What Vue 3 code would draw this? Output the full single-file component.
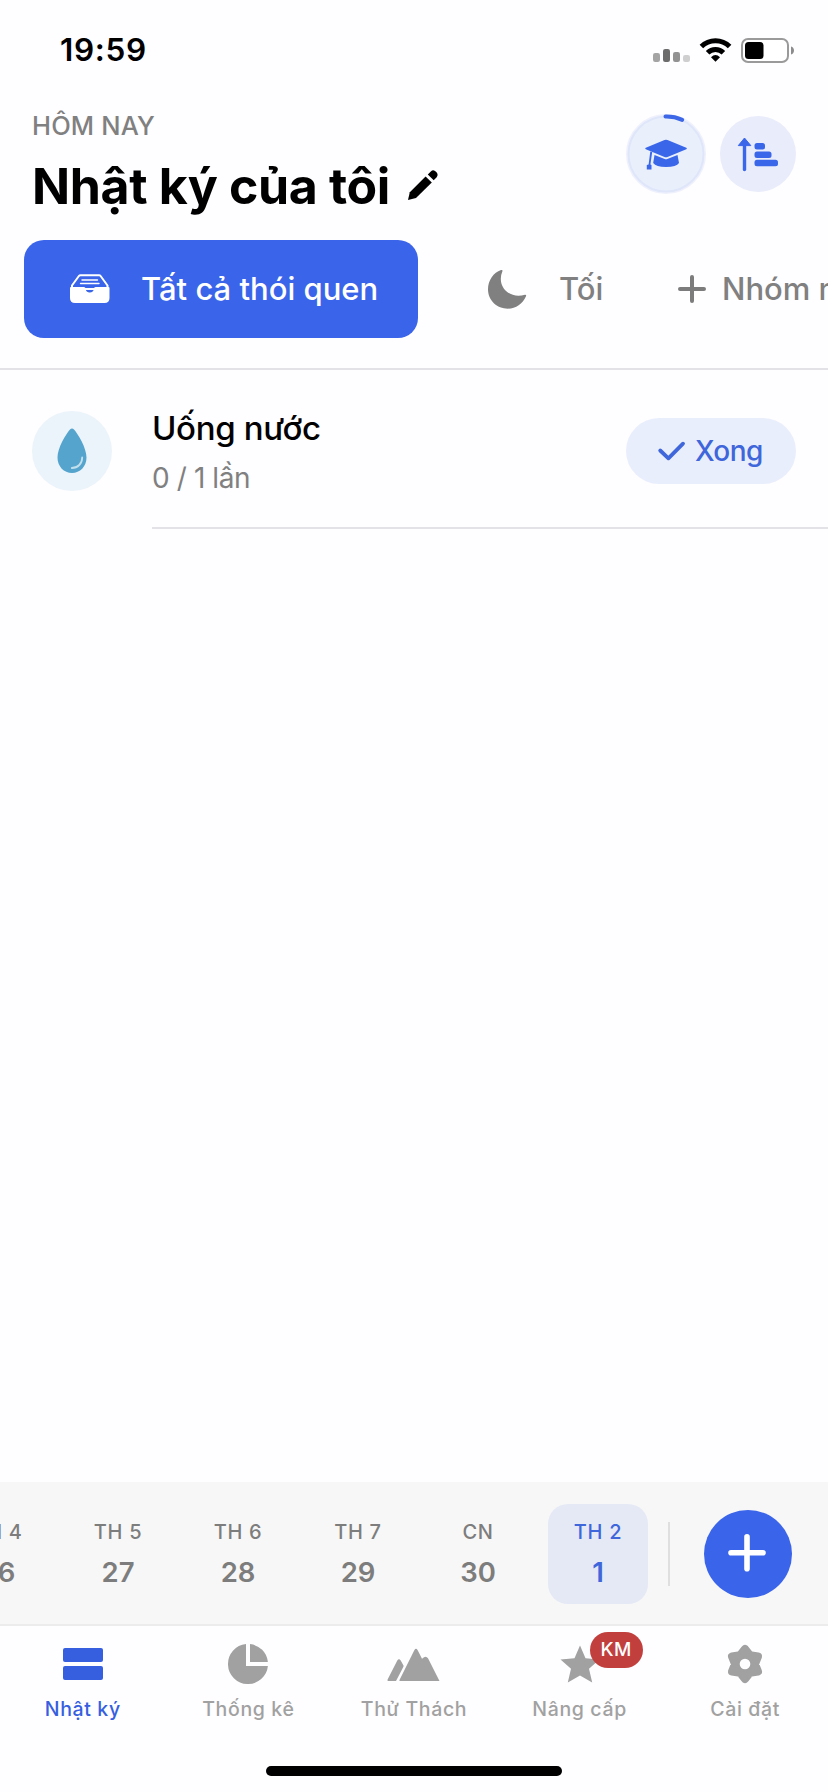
<script setup>
const days = [
  { name: 'TH 4', num: '26' },
  { name: 'TH 5', num: '27' },
  { name: 'TH 6', num: '28' },
  { name: 'TH 7', num: '29' },
  { name: 'CN', num: '30' },
  { name: 'TH 2', num: '1', active: true }
]
const tabs = [
  { id: 'journal', label: 'Nhật ký', active: true },
  { id: 'stats', label: 'Thống kê' },
  { id: 'challenge', label: 'Thử Thách' },
  { id: 'upgrade', label: 'Nâng cấp', badge: 'KM' },
  { id: 'settings', label: 'Cài đặt' }
]
</script>

<template>
  <div class="screen">
    <div class="status">
      <span class="time">19:59</span>
      <svg class="signals" width="144" height="28" viewBox="0 0 144 28">
        <rect x="0" y="15" width="7" height="9" rx="2.2" fill="#a4a4a4" />
        <rect x="10" y="11" width="7" height="13" rx="2.2" fill="#6c6c6c" />
        <rect x="20" y="14" width="7" height="10" rx="2.2" fill="#929292" />
        <rect x="30" y="17" width="7" height="7" rx="2.2" fill="#cfcfcf" />
        <g fill="none" stroke="#000" stroke-width="5">
          <path d="M48.400 8.600A20 20 0 0 1 76.600 8.600" />
          <path d="M54.600 14.800A11.200 11.200 0 0 1 70.400 14.800" />
        </g>
        <path d="M62.500 23.800L58 19.300Q62.500 14.500 67 19.300Z" fill="#000" />
        <rect x="89" y="1" width="46" height="23" rx="6" fill="#fff" stroke="#9a9a9a" stroke-width="2" />
        <rect x="92" y="4" width="18.500" height="17" rx="3.500" fill="#000" />
        <path d="M138 8.500c4 1 4 7 0 8z" fill="#8c8c8c" />
      </svg>
    </div>

    <header class="header">
      <div class="heading">
        <div class="today">HÔM NAY</div>
        <div class="title-row">
          <h1 class="title">Nhật ký của tôi</h1>
          <svg class="pencil" width="30" height="30" viewBox="0 0 30 30">
            <path d="M0 30L1.800 22.200L17.600 6.500L23.800 12.500L8 28.100Z" fill="#000" />
            <path d="M19.800 4.400L22.800 1.400Q25.500-1 28 1.800Q30.800 4.500 28.700 7.300L25.700 10.300Z" fill="#000" />
          </svg>
        </div>
      </div>
      <div class="actions">
        <svg width="80" height="82" viewBox="0 0 80 82">
          <circle cx="40" cy="41" r="38.500" fill="#e9effb" stroke="#eef1fc" stroke-width="3" />
          <circle cx="40" cy="41" r="37.500" fill="none" stroke="#dfe6fa" stroke-width="2" />
          <path d="M39.500 3.500A38 38 0 0 1 56.200 6.800" fill="none" stroke="#3d67e6" stroke-width="4" stroke-linecap="round" />
          <g fill="#3a66ea">
            <path d="M38.500 27Q40 26.300 41.500 27L60.300 34.700Q61.600 35.500 60.300 36.200L41.500 44Q40 44.600 38.500 44L19.800 36.200Q18.500 35.500 19.800 34.700Z" />
            <path d="M28.500 42L38.700 46.100Q40 46.600 41.300 46.100L51.500 42L53 50Q50.500 54 40 54Q30 54 27.200 50Z" />
            <path d="M24.300 38.500L26.200 39L24.400 51.500L25.500 52V56.500H20.800V52L22.600 51.500Z" />
          </g>
        </svg>
        <svg width="76" height="76" viewBox="0 0 76 76">
          <circle cx="38" cy="38" r="38" fill="#e9ecfa" />
          <g fill="#3a66ea">
            <path d="M24.500 25V53.500" stroke="#3a66ea" stroke-width="3.400" stroke-linecap="round" />
            <path d="M24.500 22L30.800 29.600H18.300Z" stroke="#3a66ea" stroke-width="1" stroke-linejoin="round" />
            <rect x="34.500" y="27" width="10.500" height="6.500" rx="2.500" />
            <rect x="34.500" y="35.500" width="17" height="6.500" rx="2.500" />
            <rect x="34.500" y="43.800" width="23.500" height="6.500" rx="2.500" />
          </g>
        </svg>
      </div>
    </header>

    <div class="groups">
      <div class="chip">
        <svg width="40" height="30" viewBox="0 0 40 30">
          <path d="M10.500 1.200H29Q30 1.200 30.600 2L37.500 11.500V15H2V11.500L8.900 2Q9.500 1.200 10.500 1.200Z" fill="none" stroke="#fff" stroke-width="2" />
          <path d="M12 6H27.500M10.500 9.500H29" stroke="#fff" stroke-width="1.400" stroke-linecap="round" />
          <path d="M0 14Q0 13 1 13H14Q15.500 13 15.500 14.500Q16 18.500 19.700 18.500Q23.500 18.500 24 14.500Q24 13 25.500 13H38.500Q39.500 13 39.500 14V24Q39.500 29 34.500 29H5Q0 29 0 24Z" fill="#fff" />
        </svg>
        <span class="chip-text">Tất cả thói quen</span>
      </div>
      <div class="group evening">
        <svg width="38" height="39" viewBox="0 0 38 39">
          <path d="M14.500 1Q12.300 6 13 11.500C14.500 21.500 25 28.500 37 24.700Q38.600 24.500 38 26.300C34.500 34 28 38.700 20 38.700C9 38.700 0 30.500 0 19.300C0 10.500 5.500 2.500 13 .1Q14.800-.3 14.500 1Z" fill="#808080" />
        </svg>
        <span class="group-text">Tối</span>
      </div>
      <div class="group add-group">
        <svg width="28" height="28" viewBox="0 0 28 28">
          <path d="M14 2V26M2 14H26" stroke="#7c7c7c" stroke-width="4" stroke-linecap="round" />
        </svg>
        <span class="group-text">Nhóm mới</span>
      </div>
    </div>

    <main class="list">
      <article class="habit">
        <div class="drop">
          <svg width="30" height="46" viewBox="0 0 30 46">
            <path d="M13 1.600Q15 -.6 17 1.600C21 6 29.500 20 29.500 29.500C29.500 38.500 23 45 15 45S.5 38.500.5 29.500C.5 20 9 6 13 1.600Z" fill="#55a4cd" />
            <path d="M14.800 40C21 40 25.200 35.500 25.200 29.500" fill="none" stroke="#c2dfed" stroke-width="1.800" stroke-linecap="round" />
          </svg>
        </div>
        <div class="habit-body">
          <div class="habit-text">
            <div class="habit-name">Uống nước</div>
            <div class="habit-count">0 / 1 lần</div>
          </div>
          <div class="done">
            <svg width="28" height="20" viewBox="0 0 28 20">
              <path d="M2.200 9.500L10.400 17.300L25 2.700" fill="none" stroke="#3f66da" stroke-width="3.800" stroke-linecap="round" stroke-linejoin="round" />
            </svg>
            <span class="done-text">Xong</span>
          </div>
        </div>
      </article>
    </main>

    <section class="calendar">
      <div class="days">
        <div v-for="d in days" :key="d.num" class="day" :class="{ active: d.active }">
          <span class="day-name">{{ d.name }}</span>
          <span class="day-num">{{ d.num }}</span>
        </div>
      </div>
      <div class="divider"></div>
      <div class="fab">
        <svg width="40" height="40" viewBox="0 0 40 40">
          <path d="M19 2.700V34.700M3 18.700H35" stroke="#fff" stroke-width="5.600" stroke-linecap="round" />
        </svg>
      </div>
    </section>

    <nav class="tabs">
      <div v-for="t in tabs" :key="t.id" class="tab" :class="{ active: t.active }">
        <div class="tab-icon">
          <svg v-if="t.id === 'journal'" width="40" height="40" viewBox="0 0 40 40" fill="#355fdf">
            <rect y="4" width="40" height="14" rx="2" />
            <rect y="22" width="40" height="14" rx="2" />
          </svg>
          <svg v-else-if="t.id === 'stats'" width="40" height="40" viewBox="0 0 40 40" fill="#a1a1a1">
            <path d="M18 .1V22H39.900A20 20 0 1 1 18 .1Z" />
            <path d="M22 .1A20 20 0 0 1 39.900 18H22Z" />
          </svg>
          <svg v-else-if="t.id === 'challenge'" width="54" height="40" viewBox="0 0 54 40" fill="#a1a1a1">
            <path d="M1.300 37Q0 37 .6 35.500L10.300 16.500Q12 14 13.700 16.500L16.500 21.500Q16.700 22.300 16.300 23L9 37Z" />
            <path d="M13 37Q12 37 12.500 36L27.300 6.200Q29 3.300 30.700 6.200L35 14.700L37 13.200Q39.400 12 41 14.300L52.500 37Z" />
          </svg>
          <svg v-else-if="t.id === 'upgrade'" width="40" height="40" viewBox="0 0 40 40" fill="#a1a1a1">
            <path d="M20 1.500L25.500 14.200L39.500 15.500L29 24.800L32.200 38.500L20 31.400L7.800 38.500L11 24.800L.5 15.500L14.500 14.200Z" />
          </svg>
          <svg v-else width="40" height="40" viewBox="0 0 40 40">
            <path d="M20 5L25 11.300L33 12.500L30 20L33 27.500L25 28.700L20 35L15 28.700L7 27.500L10 20L7 12.500L15 11.300Z" fill="#a1a1a1" stroke="#a1a1a1" stroke-width="8" stroke-linejoin="round" />
            <circle cx="20" cy="20" r="5.300" fill="#fefdff" />
          </svg>
          <span v-if="t.badge" class="badge">{{ t.badge }}</span>
        </div>
        <span class="tab-label">{{ t.label }}</span>
      </div>
    </nav>
    <div class="home"><div class="home-bar"></div></div>
  </div>
</template>

<style>
body { background: #fefdff; }
</style>

<style scoped>
.screen {
  width: 828px;
  height: 1792px;
  overflow: hidden;
  display: flex;
  flex-direction: column;
  background: #fefdff;
  font-family: Inter, "Liberation Sans", sans-serif;
  color: #000;
  white-space: nowrap;
}
svg { display: block; flex: none; overflow: visible; }
.status {
  height: 99px;
  flex: none;
  box-sizing: border-box;
  padding: 0 31px 0 60px;
  display: flex;
  justify-content: space-between;
  align-items: center;
}
.time { font-size: 31.500px; font-weight: 600; line-height: 40px; letter-spacing: 0.700px; }
.signals { margin-top: 4px; }
.header {
  height: 141px;
  flex: none;
  box-sizing: border-box;
  padding: 0 32px;
  display: flex;
  justify-content: space-between;
}
.heading { padding-top: 11px; }
.today { font-size: 25.500px; font-weight: 500; line-height: 32px; color: #808080; letter-spacing: 0.150px; }
.title-row { display: flex; align-items: center; gap: 18px; margin-top: 13px; }
.title { margin: 0; font-size: 50px; font-weight: 700; line-height: 62px; letter-spacing: -0.350px; }
.pencil { margin-top: -2px; }
.actions { display: flex; gap: 14px; align-items: center; height: 80px; padding-top: 15px; }
.groups {
  height: 130px;
  flex: none;
  box-sizing: border-box;
  display: flex;
  align-items: flex-start;
  padding-left: 24px;
  border-bottom: 2px solid #e3e3e7;
}
.chip {
  width: 394px;
  height: 98px;
  flex: none;
  box-sizing: border-box;
  padding-left: 46px;
  border-radius: 20px;
  background: #3a64e9;
  color: #fff;
  display: flex;
  align-items: center;
  gap: 31px;
}
.chip-text, .group-text { font-size: 31px; font-weight: 500; padding-bottom: 2px; }
.group { height: 98px; display: flex; align-items: center; color: #808080; flex: none; }
.evening { margin-left: 70px; width: 190px; gap: 33px; }
.add-group { gap: 16px; }
.list { flex: 1; }
.habit { display: flex; padding-left: 32px; }
.drop {
  width: 80px;
  height: 80px;
  margin-top: 41px;
  border-radius: 50%;
  background: #ebf4fa;
  display: flex;
  align-items: center;
  justify-content: center;
}
.habit-body {
  flex: 1;
  height: 159px;
  box-sizing: border-box;
  margin-left: 40px;
  padding-right: 32px;
  border-bottom: 2px solid #e3e3e7;
  display: flex;
  justify-content: space-between;
}
.habit-text { padding-top: 38px; }
.habit-name { font-size: 33px; font-weight: 500; line-height: 40px; letter-spacing: -0.350px; }
.habit-count { font-size: 28px; line-height: 36px; margin-top: 12px; color: #808080; letter-spacing: -0.400px; }
.done {
  width: 170px;
  height: 66px;
  margin-top: 48px;
  box-sizing: border-box;
  padding-left: 32px;
  border-radius: 33px;
  background: #e9eefc;
  color: #3f66da;
  display: flex;
  align-items: center;
  gap: 9px;
}
.done-text { font-size: 28px; font-weight: 500; letter-spacing: -0.500px; }
.calendar {
  height: 144px;
  flex: none;
  box-sizing: border-box;
  background: #f7f7f7;
  border-bottom: 2px solid #ececec;
  display: flex;
  align-items: center;
}
.days { width: 648px; height: 100px; display: flex; justify-content: flex-end; gap: 20px; flex: none; margin-top: 2px; }
.day {
  width: 100px;
  height: 100px;
  flex: none;
  border-radius: 20px;
  display: flex;
  flex-direction: column;
  align-items: center;
  color: #7d7d7d;
}
.day.active { background: #e5e9f6; color: #3f66da; }
.day-name { font-size: 20px; font-weight: 550; line-height: 24px; margin-top: 16px; letter-spacing: 0.700px; }
.day-num { font-size: 27.500px; font-weight: 600; line-height: 34px; margin-top: 11px; }
.divider { width: 2px; height: 64px; margin: 2px 34px 0 20px; background: #dfdfdf; }
.fab {
  width: 88px;
  height: 88px;
  border-radius: 50%;
  background: #3a64e9;
  display: flex;
  align-items: center;
  justify-content: center;
  margin-top: 2px;
}
.tabs { height: 140px; flex: none; display: flex; }
.tab { flex: 1; display: flex; flex-direction: column; align-items: center; padding-top: 18px; color: #a1a1a1; }
.tab.active { color: #355fdf; }
.tab-icon { position: relative; height: 40px; }
.tab-label { font-size: 19.500px; font-weight: 500; line-height: 28px; margin-top: 11px; letter-spacing: 0.650px; }
.badge {
  position: absolute;
  left: 30px;
  top: -12px;
  width: 53px;
  height: 36px;
  border-radius: 18px;
  background: #c1403d;
  color: #fff;
  font-size: 19px;
  font-weight: 550;
  line-height: 36px;
  text-align: center;
  letter-spacing: 0.500px;
}
.home { height: 26px; flex: none; display: flex; justify-content: center; }
.home-bar { width: 296px; height: 10px; border-radius: 5px; background: #000; }
</style>
